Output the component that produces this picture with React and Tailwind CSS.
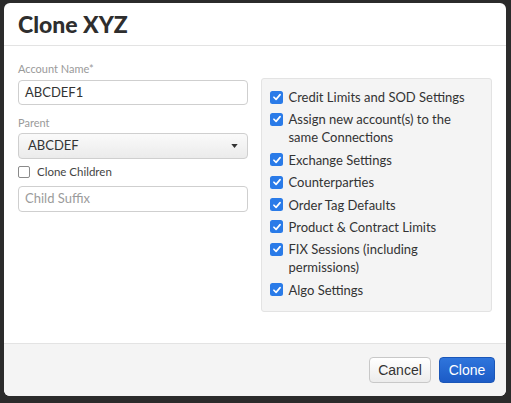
import React from 'react'

const options = [
    'Credit Limits and SOD Settings',
    'Assign new account(s) to the same Connections',
    'Exchange Settings',
    'Counterparties',
    'Order Tag Defaults',
    'Product & Contract Limits',
    'FIX Sessions (including permissions)',
    'Algo Settings',
]

const CheckedBox = () => (
    <span className="mt-[2.5px] flex h-[13px] w-[13px] shrink-0 items-center justify-center rounded-[2.5px] bg-[#2a7be8]">
        <svg viewBox="0 0 12 12" className="h-[10px] w-[10px]">
            <path d="M2.3 6.3 L4.9 8.8 L9.7 3.2" fill="none" stroke="white" strokeWidth="2" strokeLinecap="round" strokeLinejoin="round" />
        </svg>
    </span>
)

const App = () => {
    return (
        <div className="h-[403px] w-[511px] bg-[#2b2b2b] pl-[4px] pt-[3px] font-['Lato',sans-serif]">
            <div className="flex h-[393px] w-[502px] flex-col overflow-hidden rounded-[6px] bg-white">
                <div className="flex h-[43px] shrink-0 items-center border-b border-[#e3e3e3] px-[14px]">
                    <h1 className="text-[23px] font-black leading-none text-[#2e2e2e]">Clone XYZ</h1>
                </div>

                <div className="flex h-[297px] shrink-0 gap-[13px] px-[14px]">
                    <div className="w-[231px] pt-[16px]">
                        <label className="block text-[11px] leading-[14px] text-[#9a9a9a]">Account Name*</label>
                        <div className="mt-[4px] flex h-[25px] items-center rounded-[4px] border border-[#cfcfcf] px-[6px] text-[13px] text-[#333]">
                            ABCDEF1
                        </div>
                        <label className="mt-[11px] block text-[11px] leading-[14px] text-[#9a9a9a]">Parent</label>
                        <div className="mt-[3px] flex h-[26px] items-center justify-between rounded-[4px] border border-[#cfcfcf] bg-gradient-to-b from-[#fafafa] to-[#ebebeb] px-[9px] text-[13px] text-[#333]">
                            <span>ABCDEF</span>
                            <svg viewBox="0 0 8 5" className="h-[4px] w-[7px]">
                                <path d="M0 0 H8 L4 5 Z" fill="#333" />
                            </svg>
                        </div>
                        <div className="mt-[6px] flex items-center gap-[7px]">
                            <span className="h-[12px] w-[12px] rounded-[2px] border border-[#8a8a8a] bg-white" />
                            <span className="text-[11.5px] leading-[14px] text-[#444]">Clone Children</span>
                        </div>
                        <div className="mt-[7px] flex h-[26px] items-center rounded-[4px] border border-[#cfcfcf] px-[6px] text-[13px] text-[#9b9b9b]">
                            Child Suffix
                        </div>
                    </div>

                    <div className="mt-[32px] h-[234px] w-[231px] rounded-[3px] border border-[#e3e3e3] bg-[#f4f4f4] pl-[8px] pr-[6px] pt-[9px]">
                        <ul className="flex flex-col">
                            {options.map((o) => (
                                <li key={o} className="mb-[4.4px] flex gap-[5px] text-[13px] leading-[18px] text-[#333]">
                                    <CheckedBox />
                                    <span className="w-[188px]">{o}</span>
                                </li>
                            ))}
                        </ul>
                    </div>
                </div>

                <div className="flex flex-1 items-center justify-end gap-[8px] border-t border-[#e3e3e3] bg-[#f4f4f4] pr-[11px] font-['Liberation_Sans',sans-serif] text-[14px]">
                    <button className="h-[26px] w-[62px] rounded-[4px] border border-[#c8c8c8] bg-gradient-to-b from-white to-[#ececec] text-[#333]">
                        Cancel
                    </button>
                    <button className="h-[26px] w-[56px] rounded-[4px] border border-[#1a56b8] bg-gradient-to-b from-[#2f75dc] to-[#1c5bc6] text-white">
                        Clone
                    </button>
                </div>
            </div>
        </div>
    )
}

export default App
